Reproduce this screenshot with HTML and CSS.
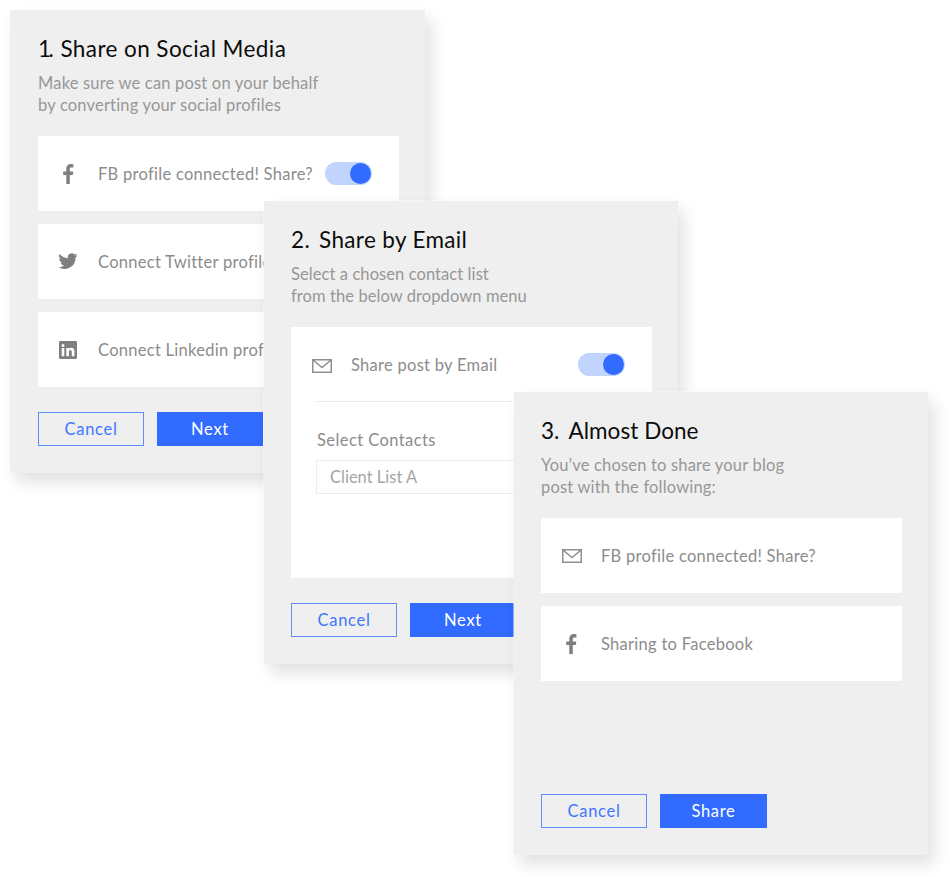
FILE: index.html
```html
<!DOCTYPE html>
<html lang="en">
<head>
<meta charset="utf-8">
<title>Share your post</title>
<link rel="stylesheet" href="styles.css">
</head>
<body>
<svg class="defs" width="0" height="0" aria-hidden="true">
  <symbol id="i-fb" viewBox="0 0 12 20"><path d="M7.8 20v-9h3l.5-3.6H7.8V5.2c0-1 .3-1.7 1.8-1.7h1.8V.3C11 .2 10 .1 8.9.1 6.200.1 4.300 1.700 4.300 4.700v2.700H1.200V11h3.100v9z"/></symbol>
  <symbol id="i-tw" viewBox="0 0 24 20"><path d="M23.500 2.400c-.8.4-1.700.6-2.700.8 1-.6 1.700-1.500 2-2.600-.9.5-1.900.9-3 1.100A4.700 4.700 0 0 0 11.800 6C7.900 5.800 4.400 3.900 2.100 1a4.700 4.700 0 0 0 1.400 6.300c-.8 0-1.500-.2-2.100-.6v.1c0 2.300 1.600 4.200 3.800 4.600-.7.2-1.400.2-2.100.1.600 1.900 2.300 3.200 4.400 3.300A9.500 9.500 0 0 1 .5 16.700 13.400 13.400 0 0 0 21.100 5.400v-.6c.9-.6 1.700-1.400 2.400-2.400z"/></symbol>
  <symbol id="i-in" viewBox="0 0 18 18"><path fill-rule="evenodd" d="M1.200 0h15.600C17.500 0 18 .5 18 1.200v15.600c0 .7-.5 1.200-1.200 1.200H1.200C.5 18 0 17.500 0 16.800V1.200C0 .5.500 0 1.200 0zM2.700 7v8.300h2.600V7zM4 3a1.500 1.500 0 1 0 0 3 1.500 1.500 0 0 0 0-3zm3.300 4v8.300h2.600v-4.100c0-1.100.2-2.100 1.500-2.100s1.400 1.200 1.400 2.200v4h2.600v-4.600c0-2.200-.5-3.900-3.100-3.900-1.200 0-2.100.7-2.400 1.300V7z"/></symbol>
  <symbol id="i-mail" viewBox="0 0 20 14"><path class="stroke" d="M.75.75h18.500v12.500H.75zM1 1l9 7.500L19 1"/></symbol>
</svg>

<main class="scene">
  <section class="card card-one">
    <h2 class="title"><span class="num">1.</span>Share on Social Media</h2>
    <p class="desc">Make sure we can post on your behalf<br>by converting your social profiles</p>
    <div class="rows">
      <div class="row">
        <svg class="icon icon-fb"><use href="#i-fb"/></svg>
        <span class="label">FB profile connected! Share?</span>
        <span class="toggle"><span class="knob"></span></span>
      </div>
      <div class="row">
        <svg class="icon icon-tw"><use href="#i-tw"/></svg>
        <span class="label">Connect Twitter profile</span>
      </div>
      <div class="row">
        <svg class="icon icon-in"><use href="#i-in"/></svg>
        <span class="label">Connect Linkedin profile</span>
      </div>
    </div>
    <div class="actions">
      <button class="btn btn-ghost">Cancel</button>
      <button class="btn btn-primary">Next</button>
    </div>
  </section>

  <section class="card card-two">
    <h2 class="title"><span class="num">2.</span>Share by Email</h2>
    <p class="desc">Select a chosen contact list<br>from the below dropdown menu</p>
    <div class="panel">
      <div class="panel-head">
        <svg class="icon icon-mail"><use href="#i-mail"/></svg>
        <span class="label">Share post by Email</span>
        <span class="toggle"><span class="knob"></span></span>
      </div>
      <div class="field">
        <div class="field-label">Select Contacts</div>
        <div class="input">Client List A</div>
      </div>
    </div>
    <div class="actions">
      <button class="btn btn-ghost">Cancel</button>
      <button class="btn btn-primary">Next</button>
    </div>
  </section>

  <section class="card card-three">
    <h2 class="title"><span class="num">3.</span>Almost Done</h2>
    <p class="desc">You’ve chosen to share your blog<br>post with the following:</p>
    <div class="rows">
      <div class="row">
        <svg class="icon icon-mail"><use href="#i-mail"/></svg>
        <span class="label">FB profile connected! Share?</span>
      </div>
      <div class="row">
        <svg class="icon icon-fb"><use href="#i-fb"/></svg>
        <span class="label">Sharing to Facebook</span>
      </div>
    </div>
    <div class="actions">
      <button class="btn btn-ghost">Cancel</button>
      <button class="btn btn-primary">Share</button>
    </div>
  </section>
</main>
</body>
</html>
```
FILE: styles.css
```css
* { box-sizing: border-box; }
html, body { margin: 0; background: #fff; }
body { font-family: Lato, "Liberation Sans", sans-serif; }
.defs { position: absolute; }
.scene { position: relative; width: 950px; height: 877px; overflow: hidden; }

.card {
  position: absolute;
  width: 414px;
  height: 463px;
  padding: 24px 26px 27px 27px;
  display: flex;
  flex-direction: column;
  background: #efefef;
  box-shadow: 6px 9px 15px rgba(0, 0, 0, .12), 0 0 0 1px rgba(255, 255, 255, .5);
}
.card-one { left: 10px; top: 10px; width: 415px; padding-left: 28px; }
.card-two { left: 264px; top: 201px; }
.card-three { left: 514px; top: 392px; }

.title {
  margin: 0;
  height: 29px;
  font-size: 22.5px;
  line-height: 29px;
  font-weight: 400;
  letter-spacing: .42px;
  color: #0c0c0c;
  white-space: nowrap;
}
.card-two .title { letter-spacing: .35px; }
.card-three .title { letter-spacing: .05px; }
.num { margin-right: 9px; }
.card-one .num { margin-right: 9px; letter-spacing: -2.5px; }
.desc {
  margin: 10px 0 0;
  font-size: 16.5px;
  line-height: 21.5px;
  letter-spacing: .18px;
  color: #979797;
  white-space: nowrap;
}
.card-two .desc { letter-spacing: .08px; }

.rows { margin-top: 20px; display: flex; flex-direction: column; gap: 13px; }
.row {
  height: 75px;
  padding-left: 21px;
  display: flex;
  align-items: center;
  background: #fff;
  white-space: nowrap;
}
.label { font-size: 16.5px; letter-spacing: .28px; color: #8c8c8c; }
.icon { flex: none; fill: #7f7f7f; }
.stroke { fill: none; stroke: #8f8f8f; stroke-width: 1.5; }
.icon-fb { width: 12px; height: 20px; margin: 0 24px 0 3px; }
.icon-tw { width: 20px; height: 17px; margin: 0 20px 0 -1px; }
.icon-in { width: 18px; height: 18px; margin: 0 21px 0 0; }
.icon-mail { width: 20px; height: 14px; margin: 0 19px 0 0; }

.toggle {
  margin-left: auto;
  margin-right: 27px;
  width: 47px;
  height: 23px;
  padding: 1px;
  display: flex;
  justify-content: flex-end;
  border-radius: 12px;
  background: #c0d4fd;
}
.knob { width: 21px; height: 21px; border-radius: 50%; background: #316bff; }

.panel { margin-top: 20px; height: 251px; background: #fff; padding: 0 25px; }
.panel-head {
  height: 75px;
  display: flex;
  align-items: center;
  border-bottom: 1px solid #ececec;
}
.panel-head .icon-mail { margin-left: -4px; margin-top: 3px; }
.panel-head .label { margin-top: 2px; }
.panel-head .toggle { margin-right: 2px; }
.field-label { margin: 27px 0 0 1px; font-size: 16.5px; line-height: 22px; letter-spacing: .42px; color: #8c8c8c; }
.input {
  margin-top: 9px;
  height: 34px;
  padding-left: 13px;
  border: 1px solid #ececec;
  font-size: 16.5px;
  line-height: 32px;
  color: #a5a5a5;
}

.actions { margin-top: auto; display: flex; gap: 13px; }
.btn {
  width: 106px;
  height: 34px;
  padding: 0;
  font-family: inherit;
  font-size: 16.5px;
  letter-spacing: .7px;
  border-radius: 0;
}
.btn-ghost { background: transparent; border: 1.5px solid #5f8dff; color: #3f76ff; }
.btn-primary { background: #316bff; border: 0; color: #fff; }
.card-three .btn-primary { width: 107px; }
```
